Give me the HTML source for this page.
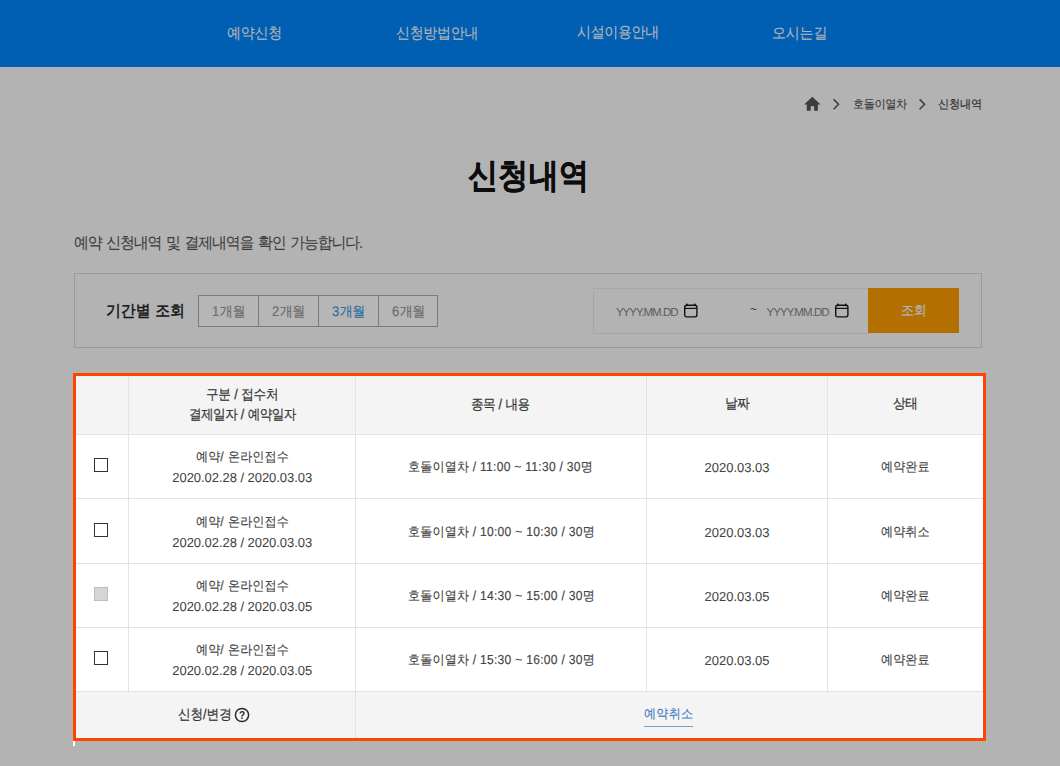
<!DOCTYPE html><html><head><meta charset="utf-8"><style>

*{margin:0;padding:0;box-sizing:border-box}
html,body{width:1060px;height:766px;overflow:hidden;background:#b3b3b3;font-family:"Liberation Sans",sans-serif;position:relative}
.t{position:absolute;white-space:nowrap;line-height:1;transform-origin:0 0;text-rendering:geometricPrecision}
.d{letter-spacing:0}
.bx{position:absolute}

</style></head><body>
<div class="bx" style="left:0;top:0;width:1060px;height:67px;background:#005fb3"></div>
<div class="bx" style="left:0;top:69px;width:1060px;height:1px;background:#aeb1b5"></div>
<svg class="bx" style="left:800px;top:92px" width="30" height="22" viewBox="800 92 30 22"><path d="M812.3 96.8 L820.6 104.6 L817.9 104.6 L817.9 110.8 L814.1 110.8 L814.1 106.2 L810.7 106.2 L810.7 110.8 L806.8 110.8 L806.8 104.6 L804.2 104.6 Z" fill="#3c3c3c"/></svg>
<svg class="bx" style="left:831.2px;top:97px" width="12" height="15" viewBox="0 0 12 15"><path d="M2.6 2.4 L7.6 7.3 L2.6 12.2" fill="none" stroke="#3c3c3c" stroke-width="1.5"/></svg>
<svg class="bx" style="left:917.4px;top:97px" width="12" height="15" viewBox="0 0 12 15"><path d="M2.6 2.4 L7.6 7.3 L2.6 12.2" fill="none" stroke="#3c3c3c" stroke-width="1.5"/></svg>
<div class="bx" style="left:74px;top:273px;width:908px;height:75px;border:1px solid #9a9a9a"></div>
<div class="bx" style="left:198px;top:295px;width:240px;height:32px;border:1px solid #7c7c7c;background:#b6b6b6"></div>
<div class="bx" style="left:258px;top:296px;width:1px;height:30px;background:#7c7c7c"></div>
<div class="bx" style="left:318px;top:296px;width:1px;height:30px;background:#7c7c7c"></div>
<div class="bx" style="left:378px;top:296px;width:1px;height:30px;background:#7c7c7c"></div>
<div class="bx" style="left:593px;top:288px;width:276px;height:46px;border:1px solid #a6a6a6"></div>
<svg class="bx" style="left:684px;top:303px" width="15" height="15" viewBox="0 0 15 15"><rect x="0.7" y="2.3" width="12.2" height="11.6" rx="1.8" fill="none" stroke="#111" stroke-width="1.4"/><line x1="0.7" y1="5.4" x2="12.9" y2="5.4" stroke="#111" stroke-width="1.2"/><rect x="2.1" y="0.6" width="1.6" height="2.6" rx="0.6" fill="#111"/><rect x="10.0" y="0.6" width="1.6" height="2.6" rx="0.6" fill="#111"/></svg>
<svg class="bx" style="left:835px;top:303px" width="15" height="15" viewBox="0 0 15 15"><rect x="0.7" y="2.3" width="12.2" height="11.6" rx="1.8" fill="none" stroke="#111" stroke-width="1.4"/><line x1="0.7" y1="5.4" x2="12.9" y2="5.4" stroke="#111" stroke-width="1.2"/><rect x="2.1" y="0.6" width="1.6" height="2.6" rx="0.6" fill="#111"/><rect x="10.0" y="0.6" width="1.6" height="2.6" rx="0.6" fill="#111"/></svg>
<div class="bx" style="left:868px;top:288px;width:91px;height:45px;background:#b36f00"></div>
<div class="bx" style="left:73px;top:373px;width:913px;height:368px;background:#ff4300"></div>
<div class="bx" style="left:76px;top:376px;width:907px;height:362px;background:#fff"></div>
<div class="bx" style="left:76px;top:376px;width:906px;height:58px;background:#f4f4f4"></div>
<div class="bx" style="left:76px;top:692px;width:906px;height:46px;background:#f4f4f4"></div>
<div class="bx" style="left:76px;top:434px;width:907px;height:1px;background:#e3e3e3"></div>
<div class="bx" style="left:76px;top:498px;width:907px;height:1px;background:#e3e3e3"></div>
<div class="bx" style="left:76px;top:563px;width:907px;height:1px;background:#e3e3e3"></div>
<div class="bx" style="left:76px;top:627px;width:907px;height:1px;background:#e3e3e3"></div>
<div class="bx" style="left:76px;top:691px;width:907px;height:1px;background:#e3e3e3"></div>
<div class="bx" style="left:128px;top:376px;width:1px;height:315px;background:#e3e3e3"></div>
<div class="bx" style="left:355px;top:376px;width:1px;height:362px;background:#e3e3e3"></div>
<div class="bx" style="left:646px;top:376px;width:1px;height:315px;background:#e3e3e3"></div>
<div class="bx" style="left:827px;top:376px;width:1px;height:315px;background:#e3e3e3"></div>
<div class="bx" style="left:94px;top:458px;width:14px;height:14px;border:1px solid #333"></div>
<div class="bx" style="left:94px;top:523px;width:14px;height:14px;border:1px solid #333"></div>
<div class="bx" style="left:94px;top:587px;width:14px;height:14px;border:1px solid #bdbdbd;background:#d5d5d5"></div>
<div class="bx" style="left:94px;top:651px;width:14px;height:14px;border:1px solid #333"></div>
<svg class="bx" style="left:234px;top:707px" width="16" height="16" viewBox="0 0 16 16"><circle cx="8" cy="8" r="6.6" fill="none" stroke="#2a2a2a" stroke-width="1.5"/><text x="8" y="12" text-anchor="middle" font-family="Liberation Sans" font-weight="700" font-size="10" fill="#2a2a2a">?</text></svg>
<div class="bx" style="left:644px;top:726px;width:49px;height:1px;background:#74a0d2"></div>
<div class="bx" style="left:73px;top:741px;width:2px;height:5px;background:#fff"></div>
<div class="t" id="m1" style="left:227.38px;top:26.00px;font-size:15px;font-weight:400;color:#b3b3b3;letter-spacing:-0.233px;transform:scaleX(0.93);-webkit-text-stroke:0.15px #b3b3b3;">예약신청</div>
<div class="t" id="m2" style="left:396.03px;top:26.00px;font-size:15px;font-weight:400;color:#b3b3b3;letter-spacing:-0.290px;transform:scaleX(0.93);-webkit-text-stroke:0.15px #b3b3b3;">신청방법안내</div>
<div class="t" id="m3" style="left:577.13px;top:25.00px;font-size:15px;font-weight:400;color:#b3b3b3;letter-spacing:-0.333px;transform:scaleX(0.93);-webkit-text-stroke:0.15px #b3b3b3;">시설이용안내</div>
<div class="t" id="m4" style="left:772.47px;top:26.00px;font-size:15px;font-weight:400;color:#b3b3b3;letter-spacing:-0.161px;transform:scaleX(0.93);-webkit-text-stroke:0.15px #b3b3b3;">오시는길</div>
<div class="t" id="bc1" style="left:852.65px;top:98.10px;font-size:12px;font-weight:500;color:#3a3a3a;letter-spacing:-0.457px;transform:scaleX(0.93);-webkit-text-stroke:0.15px #3a3a3a;">호돌이열차</div>
<div class="t" id="bc2" style="left:937.77px;top:98.10px;font-size:12px;font-weight:500;color:#2a2a2a;letter-spacing:-0.161px;transform:scaleX(0.93);-webkit-text-stroke:0.15px #2a2a2a;">신청내역</div>
<div class="t" id="title" style="left:468.12px;top:159.20px;font-size:34px;font-weight:700;color:#0d0d0d;letter-spacing:0.473px;transform:scaleX(0.88);-webkit-text-stroke:0.5px #0d0d0d;">신청내역</div>
<div class="t" id="desc" style="left:74.00px;top:235.80px;font-size:16px;font-weight:400;color:#3d3d3d;letter-spacing:-1.207px;transform:scaleX(0.93);-webkit-text-stroke:0.1px #3d3d3d;">예약<span style="letter-spacing:0.602px"> </span>신청내역<span style="letter-spacing:0.602px"> </span>및<span style="letter-spacing:0.602px"> </span>결제내역을<span style="letter-spacing:0.602px"> </span>확인<span style="letter-spacing:0.602px"> </span>가능합니다<span style="letter-spacing:0.602px">.</span></div>
<div class="t" id="flabel" style="left:106.30px;top:304.30px;font-size:16px;font-weight:400;color:#121212;letter-spacing:-0.054px;transform:scaleX(0.93);-webkit-text-stroke:0.45px #121212;">기간별<span style="letter-spacing:0.602px"> </span>조회</div>
<div class="t" id="b1" style="left:211.92px;top:303.70px;font-size:14px;font-weight:400;color:#6b6b6b;letter-spacing:-0.376px;transform:scaleX(0.93);-webkit-text-stroke:0.15px #6b6b6b;"><span style="letter-spacing:0.527px">1</span>개월</div>
<div class="t" id="b2" style="left:272.30px;top:303.70px;font-size:14px;font-weight:400;color:#6b6b6b;letter-spacing:-0.645px;transform:scaleX(0.93);-webkit-text-stroke:0.15px #6b6b6b;"><span style="letter-spacing:0.527px">2</span>개월</div>
<div class="t" id="b3" style="left:332.30px;top:303.70px;font-size:14px;font-weight:400;color:#2f6c9e;letter-spacing:-0.645px;transform:scaleX(0.93);-webkit-text-stroke:0.15px #2f6c9e;"><span style="letter-spacing:0.527px">3</span>개월</div>
<div class="t" id="b4" style="left:392.30px;top:303.70px;font-size:14px;font-weight:400;color:#6b6b6b;letter-spacing:-0.645px;transform:scaleX(0.93);-webkit-text-stroke:0.15px #6b6b6b;"><span style="letter-spacing:0.527px">6</span>개월</div>
<div class="t" id="ymd1" style="left:615.92px;top:307.70px;font-size:11.5px;font-weight:400;color:#5e5e5e;letter-spacing:-0.961px;">YYYY.MM.DD</div>
<div class="t" id="tilde" style="left:749.95px;top:303.10px;font-size:12px;font-weight:400;color:#222;letter-spacing:0.000px;">~</div>
<div class="t" id="ymd2" style="left:766.48px;top:307.70px;font-size:11.5px;font-weight:400;color:#5e5e5e;letter-spacing:-0.906px;">YYYY.MM.DD</div>
<div class="t" id="go" style="left:900.52px;top:302.70px;font-size:14px;font-weight:400;color:#b3b3b3;letter-spacing:-0.376px;transform:scaleX(0.93);-webkit-text-stroke:0.25px #b3b3b3;">조회</div>
<div class="t" id="th1a" style="left:206.22px;top:386.70px;font-size:14px;font-weight:500;color:#333;letter-spacing:-0.264px;transform:scaleX(0.9);-webkit-text-stroke:0.2px #333;">구분<span style="letter-spacing:-0.022px"> / </span>접수처</div>
<div class="t" id="th1b" style="left:188.57px;top:406.70px;font-size:14px;font-weight:500;color:#333;letter-spacing:-0.611px;transform:scaleX(0.9);-webkit-text-stroke:0.2px #333;">결제일자<span style="letter-spacing:-0.022px"> / </span>예약일자</div>
<div class="t" id="th2" style="left:471.45px;top:396.70px;font-size:14px;font-weight:500;color:#333;letter-spacing:-0.630px;transform:scaleX(0.9);-webkit-text-stroke:0.2px #333;">종목<span style="letter-spacing:-0.022px"> / </span>내용</div>
<div class="t" id="th3" style="left:724.50px;top:395.70px;font-size:14px;font-weight:500;color:#333;letter-spacing:-0.444px;transform:scaleX(0.9);-webkit-text-stroke:0.2px #333;">날짜</div>
<div class="t" id="th4" style="left:893.33px;top:396.20px;font-size:14px;font-weight:500;color:#333;letter-spacing:-0.389px;transform:scaleX(0.9);-webkit-text-stroke:0.2px #333;">상태</div>
<div class="t" id="ft1" style="left:178.43px;top:706.70px;font-size:14px;font-weight:500;color:#333;letter-spacing:-0.056px;transform:scaleX(0.9);-webkit-text-stroke:0.2px #333;">신청<span style="letter-spacing:-0.022px">/</span>변경</div>
<div class="t" id="ft2" style="left:644.25px;top:706.70px;font-size:13px;font-weight:400;color:#3b7bbf;letter-spacing:0.251px;transform:scaleX(0.93);-webkit-text-stroke:0.1px #3b7bbf;">예약취소</div>
<div class="t" id="r0a" style="left:195.75px;top:449.90px;font-size:13px;font-weight:400;color:#444;letter-spacing:0.090px;transform:scaleX(0.93);-webkit-text-stroke:0.15px #444;">예약<span style="letter-spacing:0.489px">/ </span>온라인접수</div>
<div class="t" id="r0b" style="left:172.30px;top:471.40px;font-size:13px;font-weight:400;color:#444;letter-spacing:-0.050px;-webkit-text-stroke:0.05px #444;">2020.02.28 / 2020.03.03</div>
<div class="t" id="r0c" style="left:407.93px;top:460.40px;font-size:13px;font-weight:400;color:#444;letter-spacing:0.140px;transform:scaleX(0.93);-webkit-text-stroke:0.15px #444;">호돌이열차<span style="letter-spacing:0.289px"> / 11:00 ~ 11:30 / 30</span>명</div>
<div class="t" id="r0d" style="left:704.53px;top:460.90px;font-size:13px;font-weight:400;color:#444;letter-spacing:-0.006px;-webkit-text-stroke:0.05px #444;">2020.03.03</div>
<div class="t" id="r0e" style="left:881.00px;top:460.40px;font-size:13px;font-weight:400;color:#444;letter-spacing:0.072px;transform:scaleX(0.93);-webkit-text-stroke:0.15px #444;">예약완료</div>
<div class="t" id="r1a" style="left:195.75px;top:514.90px;font-size:13px;font-weight:400;color:#444;letter-spacing:0.090px;transform:scaleX(0.93);-webkit-text-stroke:0.15px #444;">예약<span style="letter-spacing:0.489px">/ </span>온라인접수</div>
<div class="t" id="r1b" style="left:172.30px;top:536.40px;font-size:13px;font-weight:400;color:#444;letter-spacing:-0.050px;-webkit-text-stroke:0.05px #444;">2020.02.28 / 2020.03.03</div>
<div class="t" id="r1c" style="left:407.93px;top:525.40px;font-size:13px;font-weight:400;color:#444;letter-spacing:0.140px;transform:scaleX(0.93);-webkit-text-stroke:0.15px #444;">호돌이열차<span style="letter-spacing:0.289px"> / 10:00 ~ 10:30 / 30</span>명</div>
<div class="t" id="r1d" style="left:704.53px;top:525.90px;font-size:13px;font-weight:400;color:#444;letter-spacing:-0.006px;-webkit-text-stroke:0.05px #444;">2020.03.03</div>
<div class="t" id="r1e" style="left:881.00px;top:525.40px;font-size:13px;font-weight:400;color:#444;letter-spacing:0.072px;transform:scaleX(0.93);-webkit-text-stroke:0.15px #444;">예약취소</div>
<div class="t" id="r2a" style="left:195.75px;top:578.90px;font-size:13px;font-weight:400;color:#444;letter-spacing:0.090px;transform:scaleX(0.93);-webkit-text-stroke:0.15px #444;">예약<span style="letter-spacing:0.489px">/ </span>온라인접수</div>
<div class="t" id="r2b" style="left:172.30px;top:600.40px;font-size:13px;font-weight:400;color:#444;letter-spacing:-0.050px;-webkit-text-stroke:0.05px #444;">2020.02.28 / 2020.03.05</div>
<div class="t" id="r2c" style="left:407.93px;top:589.40px;font-size:13px;font-weight:400;color:#444;letter-spacing:0.140px;transform:scaleX(0.93);-webkit-text-stroke:0.15px #444;">호돌이열차<span style="letter-spacing:0.289px"> / 14:30 ~ 15:00 / 30</span>명</div>
<div class="t" id="r2d" style="left:704.53px;top:589.90px;font-size:13px;font-weight:400;color:#444;letter-spacing:-0.006px;-webkit-text-stroke:0.05px #444;">2020.03.05</div>
<div class="t" id="r2e" style="left:881.00px;top:589.40px;font-size:13px;font-weight:400;color:#444;letter-spacing:0.072px;transform:scaleX(0.93);-webkit-text-stroke:0.15px #444;">예약완료</div>
<div class="t" id="r3a" style="left:195.75px;top:642.90px;font-size:13px;font-weight:400;color:#444;letter-spacing:0.090px;transform:scaleX(0.93);-webkit-text-stroke:0.15px #444;">예약<span style="letter-spacing:0.489px">/ </span>온라인접수</div>
<div class="t" id="r3b" style="left:172.30px;top:664.40px;font-size:13px;font-weight:400;color:#444;letter-spacing:-0.050px;-webkit-text-stroke:0.05px #444;">2020.02.28 / 2020.03.05</div>
<div class="t" id="r3c" style="left:407.93px;top:653.40px;font-size:13px;font-weight:400;color:#444;letter-spacing:0.140px;transform:scaleX(0.93);-webkit-text-stroke:0.15px #444;">호돌이열차<span style="letter-spacing:0.289px"> / 15:30 ~ 16:00 / 30</span>명</div>
<div class="t" id="r3d" style="left:704.53px;top:653.90px;font-size:13px;font-weight:400;color:#444;letter-spacing:-0.006px;-webkit-text-stroke:0.05px #444;">2020.03.05</div>
<div class="t" id="r3e" style="left:881.00px;top:653.40px;font-size:13px;font-weight:400;color:#444;letter-spacing:0.072px;transform:scaleX(0.93);-webkit-text-stroke:0.15px #444;">예약완료</div>
</body></html>
